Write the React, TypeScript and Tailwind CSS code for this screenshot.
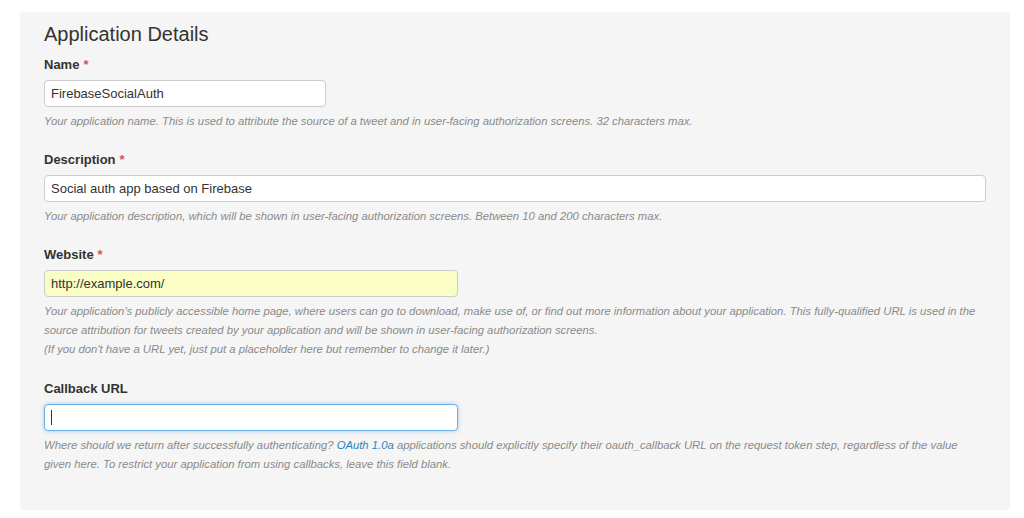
import React from 'react';

const font = { fontFamily: '"Helvetica Neue", "Liberation Sans", Arial, sans-serif' };

const Label: React.FC<{ text: string; required?: boolean }> = ({ text, required }) => (
  <div className="text-[13px] font-bold text-[#333] leading-[18px] mb-[6px]">
    {text}
    {required && <span className="text-[#d9534f] ml-1">*</span>}
  </div>
);

const help = "text-[11.3px] italic text-[#8a8a8a] leading-[19px]";
const inputBase = "block h-[27px] rounded-[4px] border px-[6px] text-[13px] text-[#333] outline-none";

export default function App() {
  return (
    <div className="w-[1024px] h-[518px] bg-white pt-[12px] pl-[20px]" style={font}>
      <div className="w-[990px] h-[498px] bg-[#f5f5f5] rounded-[4px] pl-[24px] pr-[24px] pt-[10px]">
        <h2 className="text-[20px] text-[#333] leading-[24px] mb-[10px]">Application Details</h2>

        <Label text="Name" required />
        <input readOnly value="FirebaseSocialAuth" className={`${inputBase} w-[282px] bg-white border-[#ccc]`} />
        <div className={`${help} mt-[5px] mb-[20px]`}>Your application name. This is used to attribute the source of a tweet and in user-facing authorization screens. 32 characters max.</div>

        <Label text="Description" required />
        <input readOnly value="Social auth app based on Firebase" className={`${inputBase} w-[942px] bg-white border-[#ccc]`} />
        <div className={`${help} mt-[5px] mb-[20px]`}>Your application description, which will be shown in user-facing authorization screens. Between 10 and 200 characters max.</div>

        <Label text="Website" required />
        <input readOnly value="http://example.com/" className={`${inputBase} w-[414px] bg-[#fafdc4] border-[#ccc]`} />
        <div className={`${help} mt-[5px] mb-[21px]`}>
          Your application's publicly accessible home page, where users can go to download, make use of, or find out more information about your application. This fully-qualified URL is used in the source attribution for tweets created by your application and will be shown in user-facing authorization screens.
          <br />(If you don't have a URL yet, just put a placeholder here but remember to change it later.)
        </div>

        <Label text="Callback URL" />
        <div className={`${inputBase} w-[414px] bg-white border-[#66afe9] shadow-[0_0_4px_rgba(102,175,233,0.6)] flex items-center`}>
          <span className="w-px h-[15px] bg-[#333]" />
        </div>
        <div className={`${help} mt-[5px]`}>
          Where should we return after successfully authenticating? <span className="text-[#2a85b8]">OAuth 1.0a</span> applications should explicitly specify their oauth_callback URL on the request token step, regardless of the value given here. To restrict your application from using callbacks, leave this field blank.
        </div>
      </div>
    </div>
  );
}
